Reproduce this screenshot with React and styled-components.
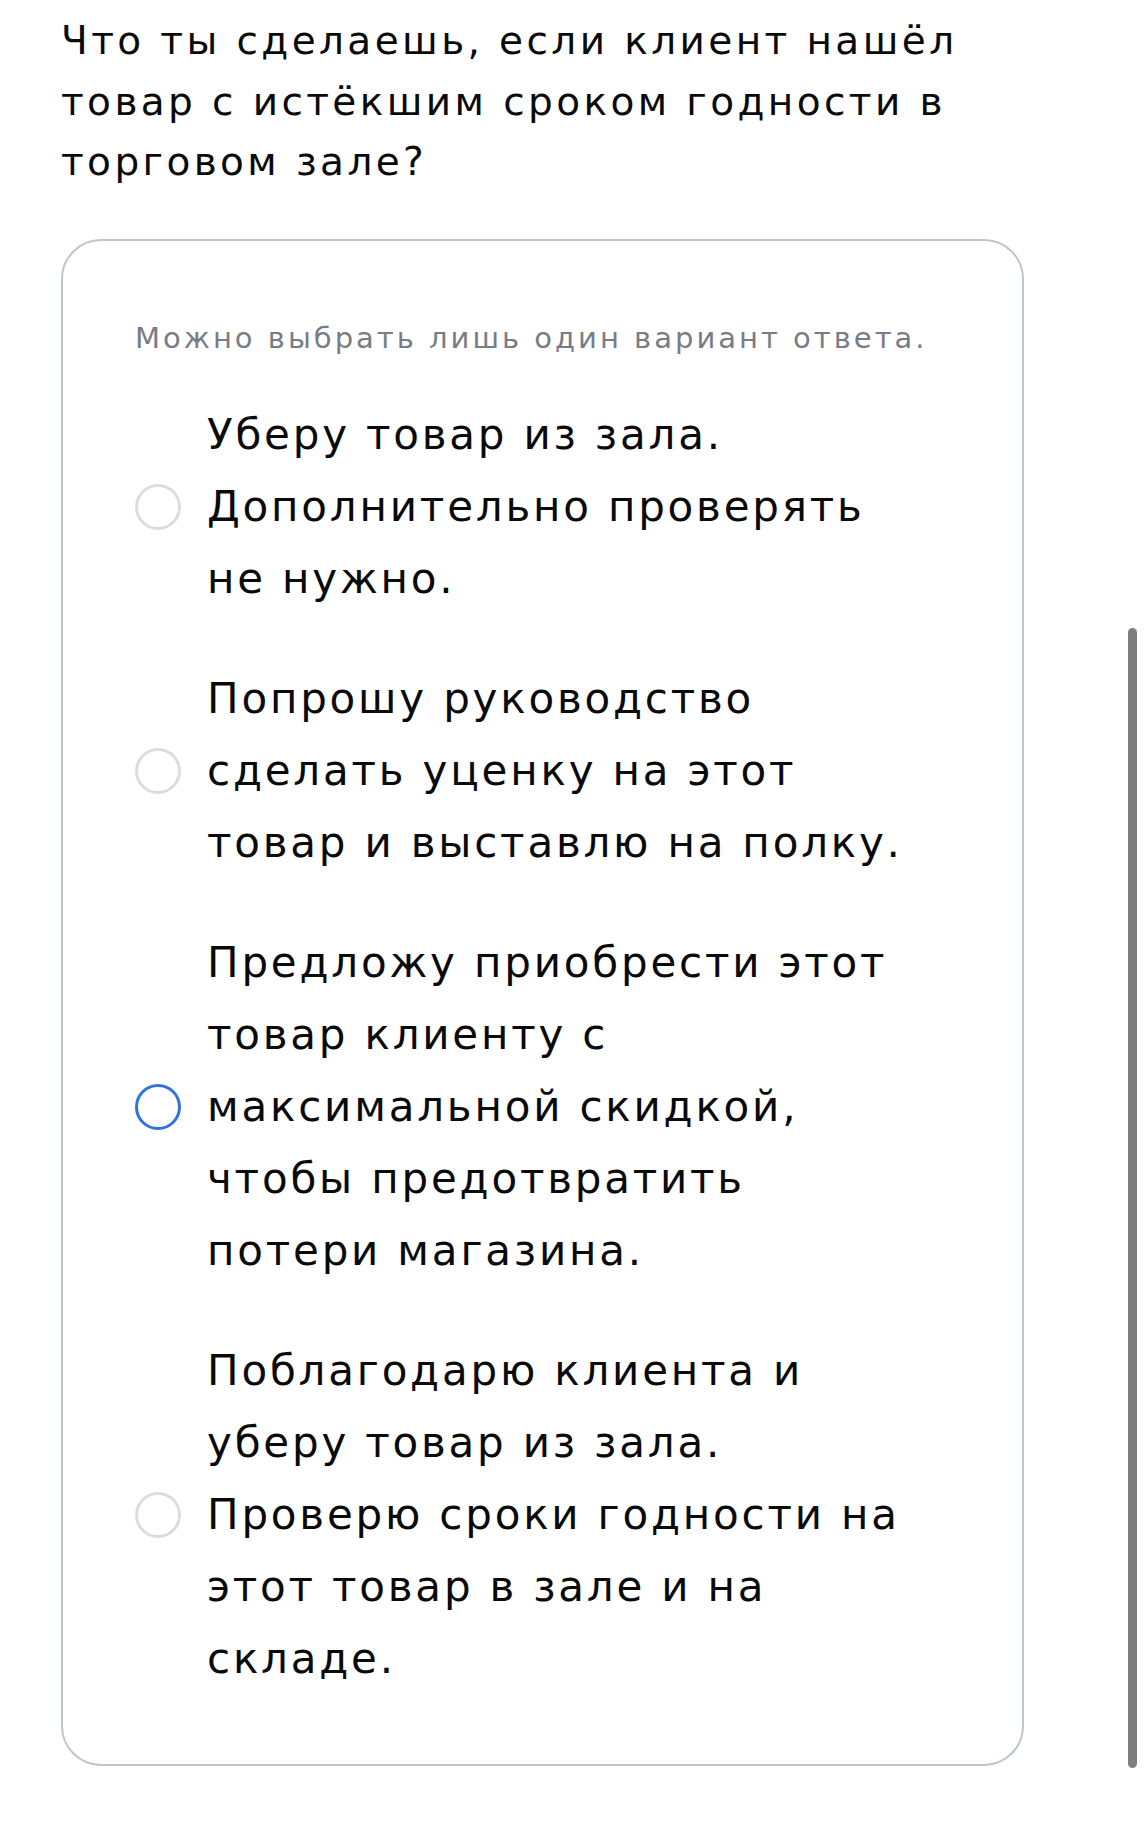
import React, { useState } from "react"
import styled, { createGlobalStyle } from "styled-components"

const GlobalStyle = createGlobalStyle`
    html, body {
        margin: 0;
        padding: 0;
        background: #fff;
    }
    body {
        font-family: "DejaVu Sans", Inter, sans-serif;
        color: #0a0a0a;
        -webkit-font-smoothing: antialiased;
    }
`

const options = [
    ["Уберу товар из зала.", "Дополнительно проверять", "не нужно."],
    ["Попрошу руководство", "сделать уценку на этот", "товар и выставлю на полку."],
    [
        "Предложу приобрести этот",
        "товар клиенту с",
        "максимальной скидкой,",
        "чтобы предотвратить",
        "потери магазина.",
    ],
    [
        "Поблагодарю клиента и",
        "уберу товар из зала.",
        "Проверю сроки годности на",
        "этот товар в зале и на",
        "складе.",
    ],
]

const Page = styled.main`
    padding: 11px 0 78px 61px;
    width: 963px;
`

const Question = styled.h1`
    margin: 0 0 46px;
    font-size: 39px;
    font-weight: 400;
    line-height: 60.5px;
    letter-spacing: 3.4px;
    color: #0a0a0a;
    white-space: nowrap;
`

const Card = styled.section`
    box-sizing: border-box;
    border: 2px solid #bfc5ce;
    border-radius: 40px;
    padding: 77px 60px 69px 72px;
    display: flex;
    flex-direction: column;
`

const Hint = styled.p`
    margin: 0 0 41px;
    font-size: 29px;
    line-height: 40px;
    letter-spacing: 3px;
    color: #787d85;
    white-space: nowrap;
`

const OptionList = styled.div`
    display: flex;
    flex-direction: column;
    gap: 48px;
`

const Option = styled.label`
    display: flex;
    align-items: center;
    gap: 26px;
    cursor: pointer;
`

const Radio = styled.span`
    box-sizing: border-box;
    flex: 0 0 auto;
    width: 46px;
    height: 46px;
    border-radius: 50%;
    border: ${p => (p.$active ? "3.5px solid #2f73e0" : "3px solid #dcdcdc")};
`

const OptionText = styled.span`
    font-size: 42px;
    line-height: 72px;
    letter-spacing: 2.8px;
    color: #0a0a0a;
    white-space: nowrap;
`

const ScrollThumb = styled.div`
    position: fixed;
    right: 8px;
    top: 628px;
    width: 9px;
    height: 1140px;
    border-radius: 5px;
    background: #7f7f7f;
`

const App = () => {
    const [focused, setFocused] = useState(2)

    return (
        <>
            <GlobalStyle />
            <Page>
                <Question>
                    Что ты сделаешь, если клиент нашёл
                    <br />
                    товар с истёкшим сроком годности в
                    <br />
                    торговом зале?
                </Question>
                <Card>
                    <Hint>Можно выбрать лишь один вариант ответа.</Hint>
                    <OptionList>
                        {options.map((lines, i) => (
                            <Option key={i} onClick={() => setFocused(i)}>
                                <Radio $active={focused === i} />
                                <OptionText>
                                    {lines.map((line, j) => (
                                        <React.Fragment key={j}>
                                            {j > 0 && <br />}
                                            {line}
                                        </React.Fragment>
                                    ))}
                                </OptionText>
                            </Option>
                        ))}
                    </OptionList>
                </Card>
            </Page>
            <ScrollThumb />
        </>
    )
}

export default App
